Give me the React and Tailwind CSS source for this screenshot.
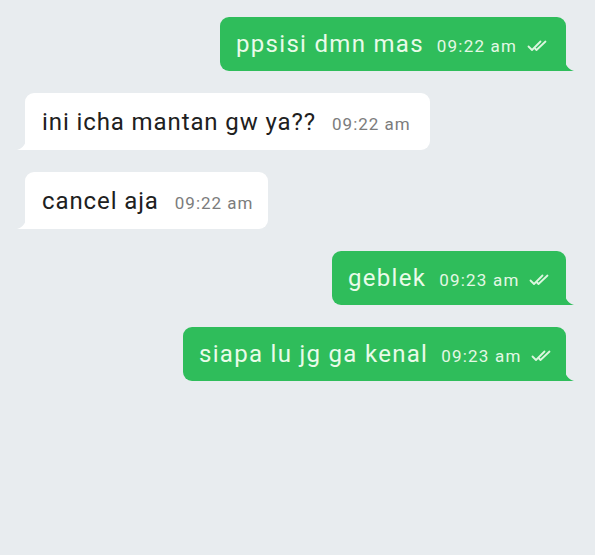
import React from "react";

function Checks() {
  return (
    <svg width="21" height="12" viewBox="0 0 21 12" fill="none" className="ml-[9px] mt-[3px] shrink-0">
      <path d="M1.5 6.5 L5 10 L13.5 1.5" stroke="#dcf6df" strokeWidth="1.8" strokeLinecap="round" strokeLinejoin="round" />
      <path d="M8 8.5 L9.5 10 L18.5 1.5" stroke="#dcf6df" strokeWidth="1.8" strokeLinecap="round" strokeLinejoin="round" />
    </svg>
  );
}

function Out({ text, time, w }) {
  return (
    <div className="flex justify-end pr-[29px]">
      <div className={`relative h-[54px] ${w} bg-[#2fbd5b] rounded-[9px] rounded-br-none flex items-center pl-[16px] pr-[18px] whitespace-nowrap`}>
        <span className="text-[24px] tracking-[1.3px] text-[#e9fbe9] leading-none shrink-0">{text}</span>
        <span className="ml-[13px] text-[17px] tracking-[1.2px] text-[#e3f8e5] leading-none mt-[5px] shrink-0">{time}</span>
        <div className="ml-auto" />
        <Checks />
        <svg width="9" height="12" viewBox="0 0 9 12" className="absolute right-[-8px] bottom-0">
          <path d="M0 0 C0 6 3 10 9 12 L0 12 Z" fill="#2fbd5b" />
        </svg>
      </div>
    </div>
  );
}

function In({ text, time, w }) {
  return (
    <div className="flex justify-start pl-[25px]">
      <div className={`relative h-[57px] ${w} bg-white rounded-[9px] rounded-bl-none flex items-center pl-[17px] pr-[12px] whitespace-nowrap`}>
        <span className="text-[24px] tracking-[0.9px] text-[#202020] leading-none shrink-0">{text}</span>
        <span className="ml-[16px] text-[17px] tracking-[1px] text-[#7c7c7c] leading-none mt-[5px] shrink-0">{time}</span>
        <svg width="9" height="12" viewBox="0 0 9 12" className="absolute left-[-8px] bottom-0">
          <path d="M9 0 C9 6 6 10 0 12 L9 12 Z" fill="#ffffff" />
        </svg>
      </div>
    </div>
  );
}

export default function App() {
  return (
    <div className="w-[595px] h-[555px] bg-[#e8ecef] overflow-hidden pt-[17px] flex flex-col gap-[22px]" style={{ fontFamily: "Roboto, 'Noto Sans', sans-serif" }}>
      <Out text="ppsisi dmn mas" time="09:22 am" w="w-[346px]" />
      <In text="ini icha mantan gw ya??" time="09:22 am" w="w-[405px]" />
      <In text="cancel aja" time="09:22 am" w="w-[243px]" />
      <Out text="geblek" time="09:23 am" w="w-[234px]" />
      <Out text="siapa lu jg ga kenal" time="09:23 am" w="w-[383px]" />
    </div>
  );
}
